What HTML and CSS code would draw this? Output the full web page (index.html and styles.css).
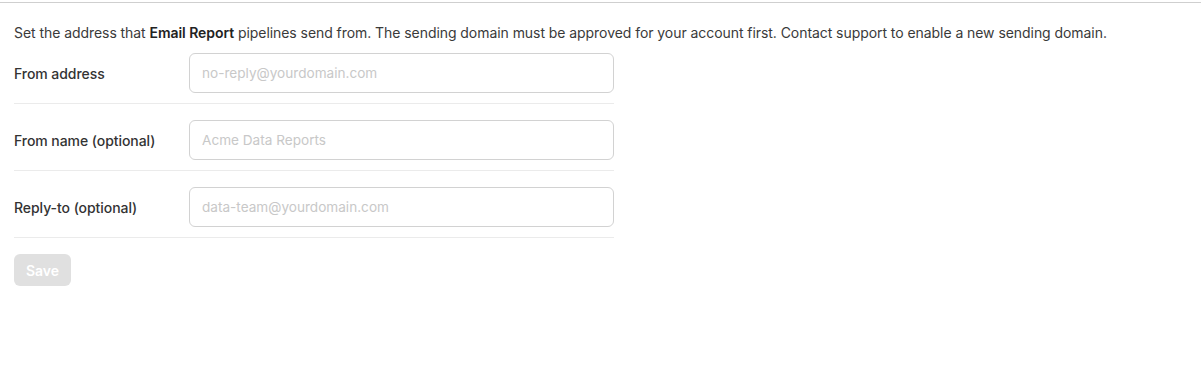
FILE: index.html
```html
<!DOCTYPE html>
<html>
<head>
<meta charset="utf-8">
<link rel="stylesheet" href="styles.css">
</head>
<body>
<div class="panel">
  <p class="desc">Set the address that <strong>Email Report</strong> pipelines send from. The sending domain must be approved for your account first. Contact support to enable a new sending domain.</p>
  <form class="form">
    <div class="row">
      <label class="label" for="from">From address</label>
      <input class="input" id="from" type="text" placeholder="no-reply@yourdomain.com">
    </div>
    <div class="row">
      <label class="label" for="name">From name (optional)</label>
      <input class="input" id="name" type="text" placeholder="Acme Data Reports">
    </div>
    <div class="row">
      <label class="label" for="reply">Reply-to (optional)</label>
      <input class="input" id="reply" type="text" placeholder="data-team@yourdomain.com">
    </div>
    <div class="actions">
      <button class="save" type="button" disabled>Save</button>
    </div>
  </form>
</div>
</body>
</html>
```

FILE: styles.css
```css
* { box-sizing: border-box; }
html, body { margin: 0; padding: 0; background: #fff; }
body {
  font-family: Inter, "Noto Sans", sans-serif;
  font-size: 14px;
  letter-spacing: -0.06px;
  color: #333;
}
.panel {
  margin-top: 2px;
  border-top: 1px solid #cfcfcf;
  padding: 20px 14px;
}
.desc {
  margin: 0;
  line-height: 20px;
  color: #3a3a3a;
}
.desc strong { font-weight: 600; color: #222; }
.form {
  width: 600px;
  margin-top: 10px;
  display: flex;
  flex-direction: column;
}
.row {
  display: flex;
  align-items: center;
  padding-bottom: 10px;
  border-bottom: 1px solid #ebebeb;
  margin-bottom: 16px;
}
.label {
  width: 175px;
  flex: none;
  font-weight: 500;
  color: #333;
  line-height: 20px;
  padding-top: 1px;
}
.input {
  width: 425px;
  height: 40px;
  border: 1px solid #d2d2d2;
  border-radius: 6px;
  padding: 0 12px;
  font-family: inherit;
  font-size: 13.6px;
  letter-spacing: 0;
  color: #333;
  outline: none;
}
.input::placeholder { color: #c8c8c8; }
.actions { display: flex; }
.save {
  height: 32px;
  width: 57px;
  border: none;
  border-radius: 6px;
  background: #e0e0e0;
  color: #fff;
  font-family: inherit;
  font-size: 14px;
  font-weight: 600;
  padding: 0;
}
```
